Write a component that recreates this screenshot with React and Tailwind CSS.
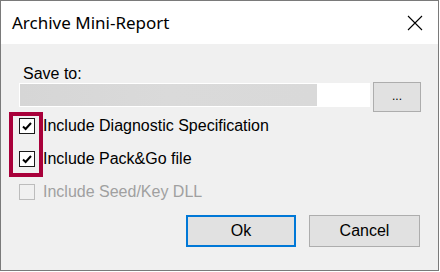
export default function App() {
  return (
    <div className="w-[440px] h-[272px] bg-white">
      <div
        className="relative w-[439px] h-[271px] border border-[#7a7a7a] flex flex-col text-black"
        style={{ fontFamily: '"Liberation Sans", Arial, sans-serif' }}
      >
        {/* TITLE BAR */}
        <div className="h-[43px] bg-white flex items-center justify-between pl-[11px] pr-[15px]">
          <span
            className="text-[17px] leading-none text-black"
            style={{ fontFamily: '"Noto Sans", "Open Sans", sans-serif' }}
          >
            Archive Mini-Report
          </span>
          <svg width="16" height="16" viewBox="0 0 16 16" className="mt-[1px]">
            <path d="M1 1 L15 15 M15 1 L1 15" stroke="#000" strokeWidth="1.1" fill="none" />
          </svg>
        </div>

        {/* BODY */}
        <div className="flex-1 bg-[#f0f0f0] flex flex-col pl-[18px] pr-[17px]">
          <div className="mt-[21px] pl-[4px] text-[16px] leading-[17px]">Save to:</div>

          <div className="flex items-start h-[30px]">
            <div className="mt-[1px] w-[351px] h-[24px] bg-white p-[1px] pr-[53px]">
              <div className="h-full bg-gradient-to-r from-[#d6d6d6] via-[#dadada] to-[#d9d9d9]" />
            </div>
            <button className="ml-[3px] w-[48px] h-[30px] border border-[#adadad] bg-[#e1e1e1] flex items-center justify-center text-[12px] leading-none pb-[3px]">
              ...
            </button>
          </div>

          <div className="flex flex-col -mt-[3px]">
            <CheckRow label="Include Diagnostic Specification" checked />
            <CheckRow label="Include Pack&Go file" checked />
            <CheckRow label="Include Seed/Key DLL" disabled />
          </div>

          <div className="flex justify-end gap-[13px] mt-[7px] pr-[1px]">
            <button className="w-[110px] h-[32px] border-2 border-[#0078d7] bg-[#e1e1e1] text-[16px] leading-none">
              Ok
            </button>
            <button className="w-[111px] h-[32px] border border-[#adadad] bg-[#e1e1e1] text-[16px] leading-none">
              Cancel
            </button>
          </div>
        </div>

        {/* HIGHLIGHT */}
        <div className="absolute left-[8px] top-[111px] w-[34px] h-[65px] border-4 border-[#a8003a]" />
      </div>
    </div>
  );
}

function CheckRow({ label, checked, disabled }) {
  return (
    <div className="h-[33px] flex items-center">
      <div
        className={
          "w-[16px] h-[16px] border flex items-center justify-center " +
          (disabled ? "border-[#bcbcbc] bg-[#f0f0f0]" : "border-[#1a1a1a] bg-white")
        }
      >
        {checked && (
          <svg width="12" height="12" viewBox="0 0 12 12">
            <path d="M2 6.5 L4.6 9 L10 3" stroke="#000" strokeWidth="2" fill="none" />
          </svg>
        )}
      </div>
      <span
        className={
          "ml-[8px] text-[16px] leading-[17px] " + (disabled ? "text-[#a0a0a0]" : "text-black")
        }
      >
        {label}
      </span>
    </div>
  );
}
